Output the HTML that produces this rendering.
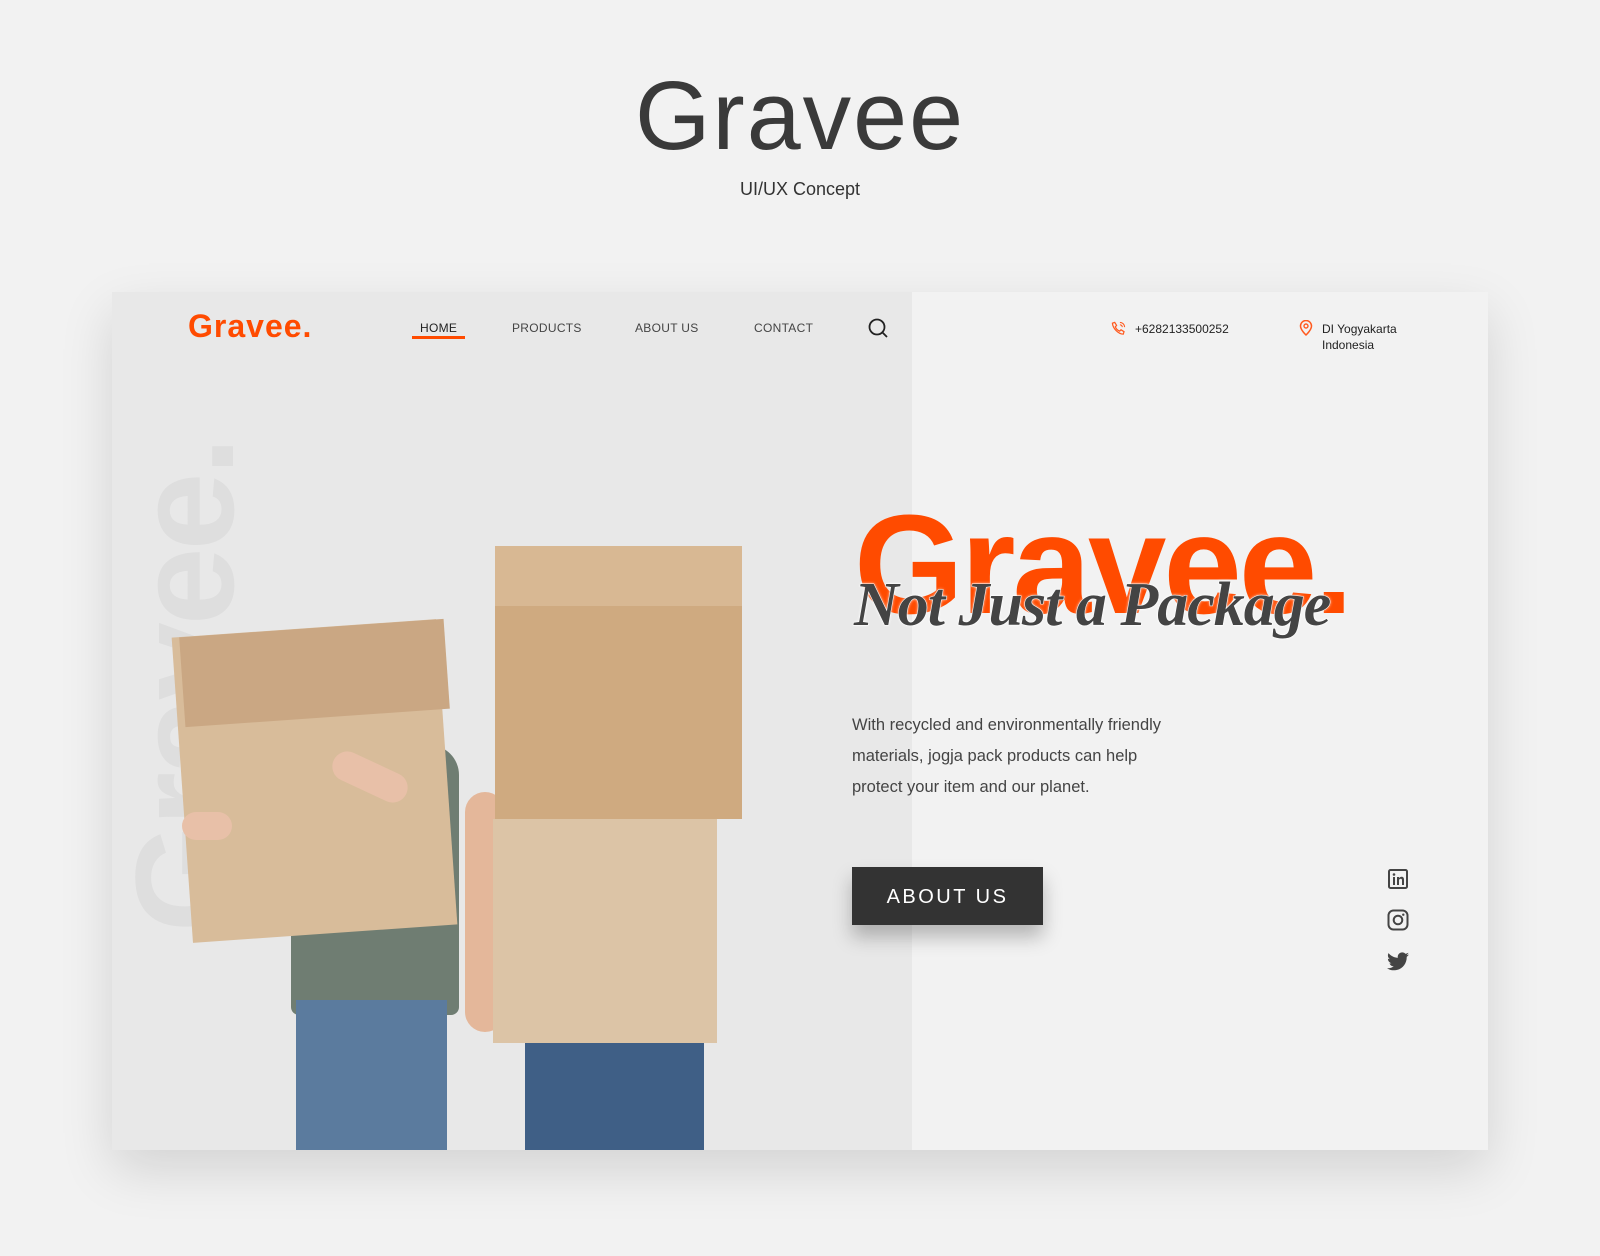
<!DOCTYPE html>
<html><head><meta charset="utf-8"><style>
*{margin:0;padding:0;box-sizing:border-box}
body{width:1600px;height:1256px;background:#f2f2f2;position:relative;overflow:hidden;font-family:"Liberation Sans",sans-serif}
.a{position:absolute}
.card{left:112px;top:292px;width:1376px;height:858px;background:#f2f2f2;box-shadow:0 20px 50px rgba(0,0,0,.13);overflow:hidden}
.nav{font-size:12px;color:#444;letter-spacing:.3px;top:321px}
</style></head><body>
<div class="a" style="left:0;width:1600px;top:60px;text-align:center;font-size:97px;color:#3a3a3a;letter-spacing:2px">Gravee</div>
<div class="a" style="left:0;width:1600px;top:179px;text-align:center;font-size:18px;color:#333">UI/UX Concept</div>

<div class="a card">
 <div class="a" style="left:0;top:0;width:800px;height:858px;background:#e8e8e8"></div>
 <div class="a" style="left:-197px;top:324px;width:540px;height:140px;transform:rotate(-90deg);transform-origin:center;font-size:140px;font-weight:bold;color:#dedede;text-align:center;line-height:140px;letter-spacing:-3px">Gravee.</div>
 <!-- people -->
 <div class="a" style="left:179px;top:453px;width:168px;height:270px;background:#6f7d72;border-radius:30px 30px 8px 8px"></div>
 <div class="a" style="left:184px;top:708px;width:151px;height:150px;background:#5b7b9e"></div>
 <div class="a" style="left:413px;top:748px;width:179px;height:110px;background:#3f5f86"></div>
 <div class="a" style="left:353px;top:500px;width:40px;height:240px;background:#e4b79a;border-radius:20px"></div>
 <div class="a" style="left:70px;top:336px;width:265px;height:306px;background:#d8bc9a;transform:rotate(-4deg)"></div>
 <div class="a" style="left:70px;top:336px;width:265px;height:90px;background:#caa783;transform:rotate(-4deg)"></div>
 <div class="a" style="left:218px;top:470px;width:80px;height:30px;background:#e8c0a8;border-radius:15px;transform:rotate(25deg)"></div>
 <div class="a" style="left:70px;top:520px;width:50px;height:28px;background:#e8c0a8;border-radius:14px"></div>
 <div class="a" style="left:383px;top:254px;width:247px;height:273px;background:#cfaa80"></div>
 <div class="a" style="left:383px;top:254px;width:247px;height:60px;background:#d8b893"></div>
 <div class="a" style="left:381px;top:527px;width:224px;height:224px;background:#dcc4a6"></div>
 <!-- right -->
 <div class="a" style="left:742px;top:202px;font-size:141px;font-weight:bold;color:#ff4b00;letter-spacing:-3px;line-height:1">Gravee.</div>
 <div class="a" style="left:742px;top:278px;font-family:'Liberation Serif',serif;font-style:italic;font-weight:bold;font-size:62px;color:#444;letter-spacing:-1px;-webkit-text-stroke:1px #fff;paint-order:stroke fill;text-shadow:0 0 3px #fff">Not Just a Package</div>
 <div class="a" style="left:740px;top:418px;font-size:16.5px;line-height:31px;color:#444">With recycled and environmentally friendly<br>materials, jogja pack products can help<br>protect your item and our planet.</div>
 <div class="a" style="left:740px;top:575px;width:191px;height:58px;background:#333;color:#fff;font-size:20px;letter-spacing:2.5px;text-align:center;line-height:60px;box-shadow:0 12px 18px rgba(0,0,0,.25)">ABOUT US</div>
 <svg class="a" style="left:1276px;top:577px" width="20" height="20" viewBox="0 0 20 20"><rect x="1" y="1" width="18" height="18" rx="1.5" fill="none" stroke="#444" stroke-width="2"/><rect x="5" y="8" width="2" height="8" fill="#444"/><circle cx="6" cy="5.5" r="1.3" fill="#444"/><path d="M9 16V8h2v1.2c.6-1 1.6-1.4 2.6-1.4 1.7 0 2.4 1.1 2.4 3V16h-2v-4.8c0-1-.4-1.5-1.2-1.5S11 10.3 11 11.3V16z" fill="#444"/></svg>
 <svg class="a" style="left:1275px;top:617px" width="22" height="22" viewBox="0 0 22 22"><rect x="1.5" y="1.5" width="19" height="19" rx="5" fill="none" stroke="#444" stroke-width="2"/><circle cx="11" cy="11" r="4.3" fill="none" stroke="#444" stroke-width="2"/><circle cx="16.3" cy="5.7" r="1.2" fill="#444"/></svg>
 <svg class="a" style="left:1275px;top:660px" width="22" height="19" viewBox="0 0 24 20"><path d="M24 2.4c-.9.4-1.8.7-2.8.8 1-.6 1.8-1.6 2.2-2.7-1 .6-2 1-3.1 1.2C19.3.7 18 0 16.6 0c-2.7 0-4.9 2.2-4.9 4.9 0 .4 0 .8.1 1.1C7.7 5.8 4.1 3.9 1.7.9c-.4.7-.7 1.6-.7 2.5 0 1.7.9 3.2 2.2 4.1-.8 0-1.6-.2-2.2-.6v.1c0 2.4 1.7 4.4 3.900 4.8-.4.1-.8.2-1.3.2-.3 0-.6 0-.9-.1.6 2 2.4 3.4 4.6 3.4-1.7 1.3-3.8 2.1-6.1 2.1-.4 0-.8 0-1.2-.1C2.2 18.8 4.8 19.6 7.5 19.6c9.1 0 14-7.5 14-14v-.6c1-.7 1.8-1.6 2.5-2.6z" fill="#444"/></svg>
</div>
<!-- nav -->
<div class="a" style="left:188px;top:308px;font-size:32px;font-weight:bold;color:#ff4b00;letter-spacing:1px">Gravee.</div>
<div class="a nav" style="left:420px;color:#222">HOME</div>
<div class="a" style="left:412px;top:336px;width:53px;height:3px;background:#ff4b00"></div>
<div class="a nav" style="left:512px">PRODUCTS</div>
<div class="a nav" style="left:635px">ABOUT US</div>
<div class="a nav" style="left:754px">CONTACT</div>
<svg class="a" style="left:868px;top:318px" width="20" height="20" viewBox="0 0 20 20"><circle cx="9" cy="9" r="7.5" fill="none" stroke="#222" stroke-width="1.8"/><path d="M14.5 14.5L19 19" stroke="#222" stroke-width="1.8"/></svg>
<svg class="a" style="left:1111px;top:321px" width="15" height="15" viewBox="0 0 16 16"><path d="M4 1.5l2 3.2-1.4 1.5c.8 2 2.6 3.8 4.6 4.6l1.5-1.4 3.2 2-.8 2.6C8 14 2 8 1.5 2.3z" fill="none" stroke="#ff5a1f" stroke-width="1.3"/><path d="M9.5 1.5a5 5 0 0 1 5 5M9.5 4a2.5 2.5 0 0 1 2.5 2.5" fill="none" stroke="#ff5a1f" stroke-width="1.2"/></svg>
<div class="a" style="left:1135px;top:322px;font-size:12px;color:#222">+6282133500252</div>
<svg class="a" style="left:1299px;top:320px" width="14" height="16" viewBox="0 0 14 16"><path d="M7 15s5.5-5 5.5-9A5.5 5.5 0 0 0 1.5 6c0 4 5.5 9 5.5 9z" fill="none" stroke="#ff5a1f" stroke-width="1.5"/><circle cx="7" cy="6" r="2" fill="none" stroke="#ff5a1f" stroke-width="1.4"/></svg>
<div class="a" style="left:1322px;top:321px;font-size:12px;line-height:16px;color:#222">DI Yogyakarta<br>Indonesia</div>
</body></html>
